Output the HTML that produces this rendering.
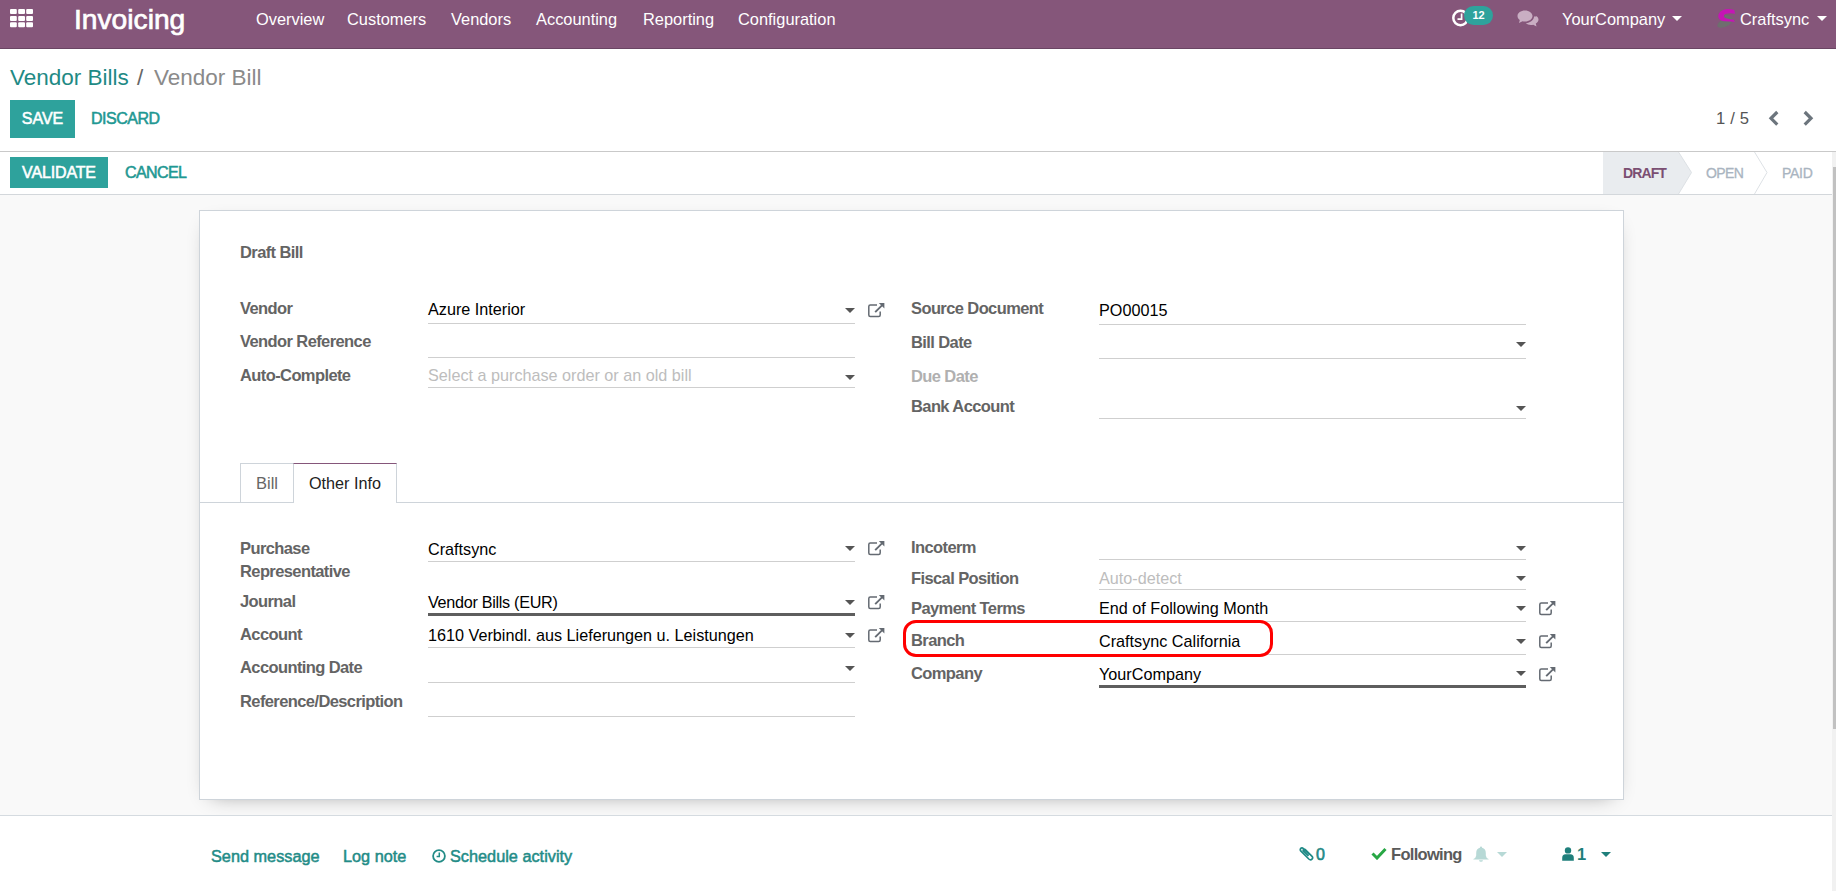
<!DOCTYPE html>
<html><head><meta charset="utf-8">
<style>
*{box-sizing:border-box}
html,body{margin:0;padding:0;width:1836px;height:891px;overflow:hidden;background:#fff;font-family:"Liberation Sans",sans-serif}
.a{position:absolute}
.t{position:absolute;white-space:nowrap;line-height:20px}
#nav{left:0;top:0;width:1836px;height:49px;background:#85567a;border-bottom:1px solid #6a4563}
.nv{color:#fff;font-size:16.4px}
#cp{left:0;top:49px;width:1836px;height:103px;background:#fff;border-bottom:1px solid #c9c9c9}
.btn{position:absolute;background:#2ea29c;color:#fff;font-size:16px;text-align:center;-webkit-text-stroke:0.55px #fff}
.lnk{color:#2a9f9a;font-size:16px;-webkit-text-stroke:0.55px #2a9f9a;letter-spacing:-0.5px}
#sb{left:0;top:152px;width:1832px;height:43px;background:#fff;border-bottom:1px solid #d3d7db}
#bg{left:0;top:195px;width:1832px;height:620px;background:#f9f9f9}
#sheet{left:199px;top:210px;width:1425px;height:590px;background:#fff;border:1px solid #ced4da;box-shadow:0 6px 20px -12px rgba(0,0,0,.45)}
#chat{left:0;top:815px;width:1832px;height:76px;background:#fff;border-top:1px solid #d5dbe0}
.lb{color:#646464;font-weight:700;font-size:16.5px;letter-spacing:-0.6px}
.lbd{color:#b0b0b0;font-weight:700;font-size:16.5px;letter-spacing:-0.6px}
.vl{color:#000;font-size:16.2px}
.ph{color:#bdbdbd;font-size:16.2px}
.ul{position:absolute;height:1px;background:#cfcfcf}
.ulk{position:absolute;height:3px;background:#5e5e5e}
.car{position:absolute;width:10px;height:5px;background:#555;clip-path:polygon(0 0,100% 0,50% 100%)}
.ext{position:absolute;width:18px;height:16px}
</style></head><body>

<!-- NAVBAR -->
<div id="nav" class="a"></div>
<svg class="a" style="left:10px;top:9px" width="24" height="19" viewBox="0 0 24 19">
<g fill="#fff">
<rect x="0" y="0" width="6.8" height="5" rx="1"/><rect x="8.2" y="0" width="6.8" height="5" rx="1"/><rect x="16.2" y="0" width="6.8" height="5" rx="1"/>
<rect x="0" y="7" width="6.8" height="5" rx="1"/><rect x="8.2" y="7" width="6.8" height="5" rx="1"/><rect x="16.2" y="7" width="6.8" height="5" rx="1"/>
<rect x="0" y="13.3" width="6.8" height="5" rx="1"/><rect x="8.2" y="13.3" width="6.8" height="5" rx="1"/><rect x="16.2" y="13.3" width="6.8" height="5" rx="1"/>
</g></svg>
<div class="t" style="left:74px;top:3.5px;color:#fff;font-size:28.2px;line-height:30px;-webkit-text-stroke:0.7px #fff">Invoicing</div>
<div class="t nv" style="left:256px;top:9px">Overview</div>
<div class="t nv" style="left:347px;top:9px">Customers</div>
<div class="t nv" style="left:451px;top:9px">Vendors</div>
<div class="t nv" style="left:536px;top:9px">Accounting</div>
<div class="t nv" style="left:643px;top:9px">Reporting</div>
<div class="t nv" style="left:738px;top:9px">Configuration</div>

<!-- activity clock -->
<svg class="a" style="left:1450px;top:8px" width="20" height="20" viewBox="0 0 20 20">
<circle cx="10.5" cy="10" r="7.2" fill="none" stroke="#fff" stroke-width="2.5"/>
<path d="M11.6 5.5 V11.2 H7.5" fill="none" stroke="#fff" stroke-width="1.7"/>
</svg>
<div class="a" style="left:1464px;top:6px;width:29px;height:19px;border-radius:9.5px;background:#2ea29c"></div>
<div class="t" style="left:1464px;top:6px;width:29px;text-align:center;color:#fff;font-size:11px;font-weight:700;line-height:19px">12</div>
<!-- chat -->
<svg class="a" style="left:1517px;top:10px" width="22" height="17" viewBox="0 0 22 17">
<g fill="#c9aec3">
<path d="M8 0.5C3.8 0.5 0.5 2.9 0.5 6c0 1.6 0.9 3 2.3 4L2 13l3.5-1.8c0.8 0.2 1.6 0.3 2.5 0.3 4.2 0 7.5-2.5 7.5-5.5S12.2 0.5 8 0.5z"/>
<path d="M17 6.5c0 3.6-3.6 6.4-8.2 6.6 1.2 1.2 3 2 5.2 2 0.8 0 1.5-0.1 2.2-0.3L19.5 16.5 18.8 13.5c1.6-0.9 2.7-2.3 2.7-3.9 0-1.3-0.7-2.5-1.8-3.4-0.8 0.1-1.8 0.2-2.7 0.3z"/>
</g></svg>
<div class="t nv" style="left:1562px;top:9px">YourCompany</div>
<div class="car" style="left:1672px;top:16px;background:#fff"></div>
<!-- craftsync logo -->
<svg class="a" style="left:1716px;top:8px" width="20" height="21" viewBox="0 0 20 21">
<path d="M1.2 18.2 Q1.5 13.5 7.5 11.5 Q9 9 8 6 Q13.5 7.5 16.8 10.5 Q16.5 16 10 18.8 Q3.5 21 1.2 18.2 Z" fill="#6e6e6e"/>
<path d="M18.3 2 Q14 0.6 9.5 1.2 Q2.5 2.5 2.2 8.5 Q2.8 12.5 8 13.2 L19 13.8 L17.2 11.6 Q11 11.2 8.5 9.6 Q6.8 7 10 5.8 Q14 4.8 19 5.8 Z" fill="#c515b5"/>
</svg>
<div class="t nv" style="left:1740px;top:9px">Craftsync</div>
<div class="car" style="left:1817px;top:16px;background:#fff"></div>

<!-- CONTROL PANEL -->
<div id="cp" class="a"></div>
<div class="t" style="left:10px;top:66px;color:#1f8a85;font-size:22.5px;line-height:24px">Vendor Bills</div>
<div class="t" style="left:137px;top:66px;color:#666;font-size:22.5px;line-height:24px">/</div>
<div class="t" style="left:154px;top:66px;color:#8a8a8a;font-size:22.5px;line-height:24px">Vendor Bill</div>
<div class="btn" style="left:10px;top:100px;width:65px;height:38px;line-height:38px">SAVE</div>
<div class="t lnk" style="left:91px;top:109px;color:#1f9893;-webkit-text-stroke-color:#1f9893">DISCARD</div>
<div class="t" style="left:1716px;top:109px;color:#555;font-size:16.6px;word-spacing:0.4px">1 / 5</div>
<svg class="a" style="left:1767px;top:110px" width="13" height="17" viewBox="0 0 13 17"><path d="M10.3 2 L4 8.3 L10.3 14.6" fill="none" stroke="#6c757d" stroke-width="3.2"/></svg>
<svg class="a" style="left:1801px;top:110px" width="13" height="17" viewBox="0 0 13 17"><path d="M3.7 2 L10 8.3 L3.7 14.6" fill="none" stroke="#6c757d" stroke-width="3.2"/></svg>

<!-- STATUSBAR -->
<div id="sb" class="a"></div>
<div class="btn" style="left:10px;top:157px;width:98px;height:31px;line-height:31px;letter-spacing:-0.15px">VALIDATE</div>
<div class="t lnk" style="left:125px;top:163px;color:#1f9893;-webkit-text-stroke-color:#1f9893;letter-spacing:-0.6px">CANCEL</div>
<svg class="a" style="left:1603px;top:152px" width="229" height="42" viewBox="0 0 229 42">
<path d="M0 0 H75.5 L88.5 20.5 L75.5 42 H0Z" fill="#e9ecef"/>
<path d="M75.5 0 L88.5 20.5 L75.5 42" fill="none" stroke="#dde1e5" stroke-width="1"/>
<path d="M151.5 0 L164 20.5 L151.5 42" fill="none" stroke="#dde1e5" stroke-width="1"/>
</svg>
<div class="t" style="left:1623px;top:163px;color:#7b4f72;font-size:14px;font-weight:700;letter-spacing:-0.9px">DRAFT</div>
<div class="t" style="left:1706px;top:163px;color:#a9b4c0;font-size:14px;letter-spacing:-0.6px;-webkit-text-stroke:0.3px #a9b4c0">OPEN</div>
<div class="t" style="left:1782px;top:163px;color:#a9b4c0;font-size:14px;letter-spacing:-0.3px;-webkit-text-stroke:0.3px #a9b4c0">PAID</div>

<!-- scrollbar -->
<div class="a" style="left:1832px;top:152px;width:4px;height:739px;background:#f1f1f1"></div>
<div class="a" style="left:1833px;top:167px;width:3px;height:562px;background:#c1c1c1"></div>

<!-- FORM BG -->
<div id="bg" class="a"></div>
<div id="sheet" class="a"></div>
<div class="t lb" style="left:240px;top:242px">Draft Bill</div>

<!-- group 1 left -->
<div class="t lb" style="left:240px;top:298px">Vendor</div>
<div class="t vl" style="left:428px;top:299px">Azure Interior</div>
<div class="ul" style="left:428px;top:323px;width:427px"></div>
<div class="car" style="left:845px;top:308px"></div>
<svg class="ext" style="left:868px;top:302px" viewBox="0 0 18 16"><path d="M12.2 9.6 V12.9 Q12.2 14.4 10.7 14.4 H2.3 Q0.8 14.4 0.8 12.9 V4.6 Q0.8 3.1 2.3 3.1 H9" fill="none" stroke="#646a72" stroke-width="1.5"/><path d="M10.8 0.9 H16.4 V6.5Z" fill="#646a72"/><path d="M15 2.4 L7.2 10.2" stroke="#646a72" stroke-width="1.9"/></svg>

<div class="t lb" style="left:240px;top:331px">Vendor Reference</div>
<div class="ul" style="left:428px;top:357px;width:427px"></div>

<div class="t lb" style="left:240px;top:365px">Auto-Complete</div>
<div class="t ph" style="left:428px;top:365px">Select a purchase order or an old bill</div>
<div class="ul" style="left:428px;top:387px;width:427px"></div>
<div class="car" style="left:845px;top:375px"></div>

<!-- group 1 right -->
<div class="t lb" style="left:911px;top:298px">Source Document</div>
<div class="t vl" style="left:1099px;top:300px">PO00015</div>
<div class="ul" style="left:1099px;top:324px;width:427px"></div>
<div class="t lb" style="left:911px;top:332px">Bill Date</div>
<div class="ul" style="left:1099px;top:358px;width:427px"></div>
<div class="car" style="left:1516px;top:342px"></div>
<div class="t lbd" style="left:911px;top:366px">Due Date</div>
<div class="t lb" style="left:911px;top:396px">Bank Account</div>
<div class="ul" style="left:1099px;top:418px;width:427px"></div>
<div class="car" style="left:1516px;top:406px"></div>

<!-- tabs -->
<div class="a" style="left:200px;top:502px;width:1423px;height:1px;background:#ced4da"></div>
<div class="a" style="left:240px;top:463px;width:54px;height:39px;border:1px solid #ced4da;border-bottom:none;background:#fff"></div>
<div class="a" style="left:293px;top:463px;width:104px;height:40px;border:1px solid #ced4da;border-top:1px solid #85567a;border-bottom:none;background:#fff"></div>
<div class="t" style="left:256px;top:473px;color:#666;font-size:16.5px">Bill</div>
<div class="t" style="left:309px;top:473px;color:#222;font-size:16.2px">Other Info</div>

<!-- group 2 left -->
<div class="t lb" style="left:240px;top:538px">Purchase</div>
<div class="t lb" style="left:240px;top:561px">Representative</div>
<div class="t vl" style="left:428px;top:539px">Craftsync</div>
<div class="ul" style="left:428px;top:561px;width:427px"></div>
<div class="car" style="left:845px;top:546px"></div>
<svg class="ext" style="left:868px;top:540px" viewBox="0 0 18 16"><path d="M12.2 9.6 V12.9 Q12.2 14.4 10.7 14.4 H2.3 Q0.8 14.4 0.8 12.9 V4.6 Q0.8 3.1 2.3 3.1 H9" fill="none" stroke="#646a72" stroke-width="1.5"/><path d="M10.8 0.9 H16.4 V6.5Z" fill="#646a72"/><path d="M15 2.4 L7.2 10.2" stroke="#646a72" stroke-width="1.9"/></svg>

<div class="t lb" style="left:240px;top:591px">Journal</div>
<div class="t vl" style="left:428px;top:592px;letter-spacing:-0.3px">Vendor Bills (EUR)</div>
<div class="ulk" style="left:428px;top:613px;width:427px"></div>
<div class="car" style="left:845px;top:600px"></div>
<svg class="ext" style="left:868px;top:594px" viewBox="0 0 18 16"><path d="M12.2 9.6 V12.9 Q12.2 14.4 10.7 14.4 H2.3 Q0.8 14.4 0.8 12.9 V4.6 Q0.8 3.1 2.3 3.1 H9" fill="none" stroke="#646a72" stroke-width="1.5"/><path d="M10.8 0.9 H16.4 V6.5Z" fill="#646a72"/><path d="M15 2.4 L7.2 10.2" stroke="#646a72" stroke-width="1.9"/></svg>

<div class="t lb" style="left:240px;top:624px">Account</div>
<div class="t vl" style="left:428px;top:625px">1610 Verbindl. aus Lieferungen u. Leistungen</div>
<div class="ul" style="left:428px;top:647px;width:427px"></div>
<div class="car" style="left:845px;top:633px"></div>
<svg class="ext" style="left:868px;top:627px" viewBox="0 0 18 16"><path d="M12.2 9.6 V12.9 Q12.2 14.4 10.7 14.4 H2.3 Q0.8 14.4 0.8 12.9 V4.6 Q0.8 3.1 2.3 3.1 H9" fill="none" stroke="#646a72" stroke-width="1.5"/><path d="M10.8 0.9 H16.4 V6.5Z" fill="#646a72"/><path d="M15 2.4 L7.2 10.2" stroke="#646a72" stroke-width="1.9"/></svg>

<div class="t lb" style="left:240px;top:657px">Accounting Date</div>
<div class="ul" style="left:428px;top:682px;width:427px"></div>
<div class="car" style="left:845px;top:666px"></div>

<div class="t lb" style="left:240px;top:691px">Reference/Description</div>
<div class="ul" style="left:428px;top:716px;width:427px"></div>

<!-- group 2 right -->
<div class="t lb" style="left:911px;top:537px">Incoterm</div>
<div class="ul" style="left:1099px;top:559px;width:427px"></div>
<div class="car" style="left:1516px;top:546px"></div>

<div class="t lb" style="left:911px;top:568px">Fiscal Position</div>
<div class="t ph" style="left:1099px;top:568px">Auto-detect</div>
<div class="ul" style="left:1099px;top:589px;width:427px"></div>
<div class="car" style="left:1516px;top:576px"></div>

<div class="t lb" style="left:911px;top:598px">Payment Terms</div>
<div class="t vl" style="left:1099px;top:598px">End of Following Month</div>
<div class="ul" style="left:1099px;top:621px;width:427px"></div>
<div class="car" style="left:1516px;top:606px"></div>
<svg class="ext" style="left:1539px;top:600px" viewBox="0 0 18 16"><path d="M12.2 9.6 V12.9 Q12.2 14.4 10.7 14.4 H2.3 Q0.8 14.4 0.8 12.9 V4.6 Q0.8 3.1 2.3 3.1 H9" fill="none" stroke="#646a72" stroke-width="1.5"/><path d="M10.8 0.9 H16.4 V6.5Z" fill="#646a72"/><path d="M15 2.4 L7.2 10.2" stroke="#646a72" stroke-width="1.9"/></svg>

<div class="t lb" style="left:911px;top:630px">Branch</div>
<div class="t vl" style="left:1099px;top:631px">Craftsync California</div>
<div class="ul" style="left:1099px;top:654px;width:427px"></div>
<div class="car" style="left:1516px;top:639px"></div>
<svg class="ext" style="left:1539px;top:633px" viewBox="0 0 18 16"><path d="M12.2 9.6 V12.9 Q12.2 14.4 10.7 14.4 H2.3 Q0.8 14.4 0.8 12.9 V4.6 Q0.8 3.1 2.3 3.1 H9" fill="none" stroke="#646a72" stroke-width="1.5"/><path d="M10.8 0.9 H16.4 V6.5Z" fill="#646a72"/><path d="M15 2.4 L7.2 10.2" stroke="#646a72" stroke-width="1.9"/></svg>

<div class="t lb" style="left:911px;top:663px">Company</div>
<div class="t vl" style="left:1099px;top:664px">YourCompany</div>
<div class="ulk" style="left:1099px;top:685px;width:427px"></div>
<div class="car" style="left:1516px;top:671px"></div>
<svg class="ext" style="left:1539px;top:666px" viewBox="0 0 18 16"><path d="M12.2 9.6 V12.9 Q12.2 14.4 10.7 14.4 H2.3 Q0.8 14.4 0.8 12.9 V4.6 Q0.8 3.1 2.3 3.1 H9" fill="none" stroke="#646a72" stroke-width="1.5"/><path d="M10.8 0.9 H16.4 V6.5Z" fill="#646a72"/><path d="M15 2.4 L7.2 10.2" stroke="#646a72" stroke-width="1.9"/></svg>

<!-- red highlight -->
<div class="a" style="left:903px;top:620px;width:370px;height:36.5px;border:3px solid #ff0000;border-radius:13px"></div>

<!-- CHATTER -->
<div id="chat" class="a"></div>
<div class="t" style="left:211px;top:846px;font-size:16.3px;color:#238c87;-webkit-text-stroke:0.5px #238c87">Send message</div>
<div class="t" style="left:343px;top:846px;font-size:16.3px;color:#238c87;-webkit-text-stroke:0.5px #238c87">Log note</div>
<svg class="a" style="left:431px;top:848px" width="16" height="16" viewBox="0 0 16 16"><circle cx="8" cy="8" r="5.9" fill="none" stroke="#238c87" stroke-width="1.8"/><path d="M8.3 4.6 V8.6 H5.6" fill="none" stroke="#238c87" stroke-width="1.5"/></svg>
<div class="t" style="left:450px;top:846px;font-size:16.3px;color:#238c87;-webkit-text-stroke:0.5px #238c87">Schedule activity</div>

<svg class="a" style="left:1299px;top:845px" width="16" height="17" viewBox="0 0 16 17"><path d="M10.5 9.5 L4.8 3.8 Q3 2 1.8 3.4 Q0.6 4.8 2.2 6.4 L9.8 14 Q11.5 15.6 13 14.2 Q14.5 12.8 12.8 11.1 L6.3 4.6 Q5.3 3.8 4.5 4.6 Q3.8 5.4 4.6 6.2 L9.5 11" fill="none" stroke="#1f8a86" stroke-width="1.7"/></svg>
<div class="t" style="left:1316px;top:845px;font-size:16px;color:#1f8a86;-webkit-text-stroke:0.6px #1f8a86">0</div>
<svg class="a" style="left:1371px;top:847px" width="16" height="13" viewBox="0 0 16 13"><path d="M1.5 6.5 L6 11 L14.5 2" fill="none" stroke="#28a745" stroke-width="3"/></svg>
<div class="t" style="left:1391px;top:844px;font-size:16.5px;font-weight:700;letter-spacing:-0.7px;color:#5a5a5a">Following</div>
<svg class="a" style="left:1473px;top:846px" width="16" height="16" viewBox="0 0 16 16"><path d="M8 0.6 Q9.1 0.6 9.1 1.8 Q12.8 2.7 12.8 7 V9.6 Q13 12 15.6 13 V13.6 H0.4 V13 Q3 12 3.2 9.6 V7 Q3.2 2.7 6.9 1.8 Q6.9 0.6 8 0.6Z M6 14.3 H10 Q9.8 15.8 8 15.8 Q6.2 15.8 6 14.3Z" fill="#b7d9d6"/></svg>
<div class="car" style="left:1497px;top:852px;background:#b7d9d6"></div>
<svg class="a" style="left:1562px;top:847px" width="12" height="14" viewBox="0 0 12 14"><circle cx="6" cy="3.4" r="3.2" fill="#1f7f7b"/><path d="M0.2 13.8 V10.8 Q0.2 7.2 3.6 7.2 H8.4 Q11.8 7.2 11.8 10.8 V13.8Z" fill="#1f7f7b"/></svg>
<div class="t" style="left:1577px;top:844px;font-size:16.5px;font-weight:700;color:#1f7f7b">1</div>
<div class="car" style="left:1601px;top:852px;background:#1f7f7b"></div>

</body></html>
